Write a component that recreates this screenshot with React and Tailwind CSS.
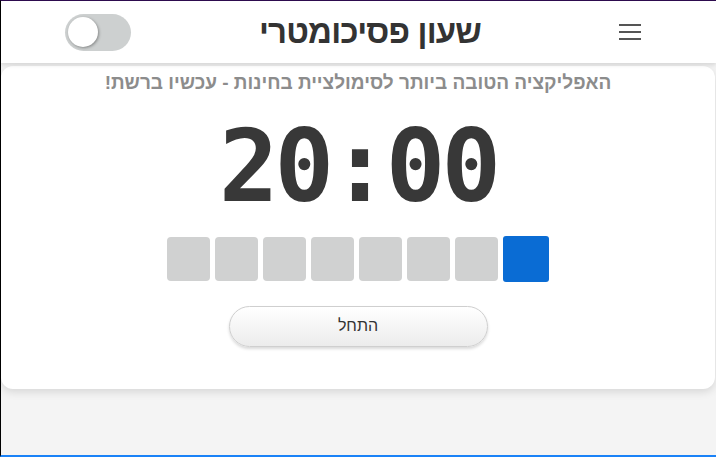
export default function App() {
  const boxes = [0, 1, 2, 3, 4, 5, 6];

  return (
    <div
      className="h-[457px] flex flex-col bg-[#f4f4f4] border-l border-l-black border-t border-t-[#2d0b4e] border-b-2 border-b-[#1a82f7] overflow-hidden"
      style={{ fontFamily: '"Liberation Sans", Arial, sans-serif' }}
    >
      {/* Header */}
      <header className="h-[62px] shrink-0 bg-white shadow-[0_2px_4px_rgba(0,0,0,0.12)] flex items-center justify-between pl-[64px] pr-[75px] relative z-10">
        <button className="w-[66px] h-[37px] rounded-full bg-[#cdd0d0] flex items-center px-[3px]">
          <span className="w-[30px] h-[30px] rounded-full bg-white shadow-[1px_1px_3px_rgba(0,0,0,0.35)]" />
        </button>
        <h1 dir="rtl" className="mr-[10px] text-[33px] font-bold text-[#333] tracking-tight">
          שעון פסיכומטרי
        </h1>
        <button className="w-[22px] flex flex-col gap-[5px]">
          <span className="h-[2px] bg-[#555]" />
          <span className="h-[2px] bg-[#555]" />
          <span className="h-[2px] bg-[#555]" />
        </button>
      </header>

      {/* Card */}
      <main className="mt-[3px] mr-[1px] h-[323px] bg-white rounded-xl shadow-[0_3px_8px_rgba(0,0,0,0.12)] flex flex-col items-center">
        <p dir="rtl" className="mt-[3px] text-[19px] font-bold text-[#8c8c8c]">
          האפליקציה הטובה ביותר לסימולציית בחינות - עכשיו ברשת!
        </p>
        <div
          className="mt-[14px] h-[110px] flex items-center text-[99px] font-bold tracking-[-4px] leading-none text-[#383838]"
          style={{ fontFamily: '"DejaVu Sans Mono", monospace' }}
        >
          20:00
        </div>
        <div className="mt-[14px] flex items-center gap-[5px]">
          {boxes.map((b) => (
            <div key={b} className="w-[43px] h-[44px] rounded-[4px] bg-[#d0d1d1]" />
          ))}
          <div className="w-[46px] h-[46px] rounded-[3px] bg-[#0a6cd4]" />
        </div>
        <button className="mt-[24px] w-[259px] h-[41px] rounded-full border border-[#cfcfcf] bg-gradient-to-b from-white to-[#ececec] shadow-[0_2px_3px_rgba(0,0,0,0.15)] text-[16px] text-[#333]">
          התחל
        </button>
      </main>
    </div>
  );
}
